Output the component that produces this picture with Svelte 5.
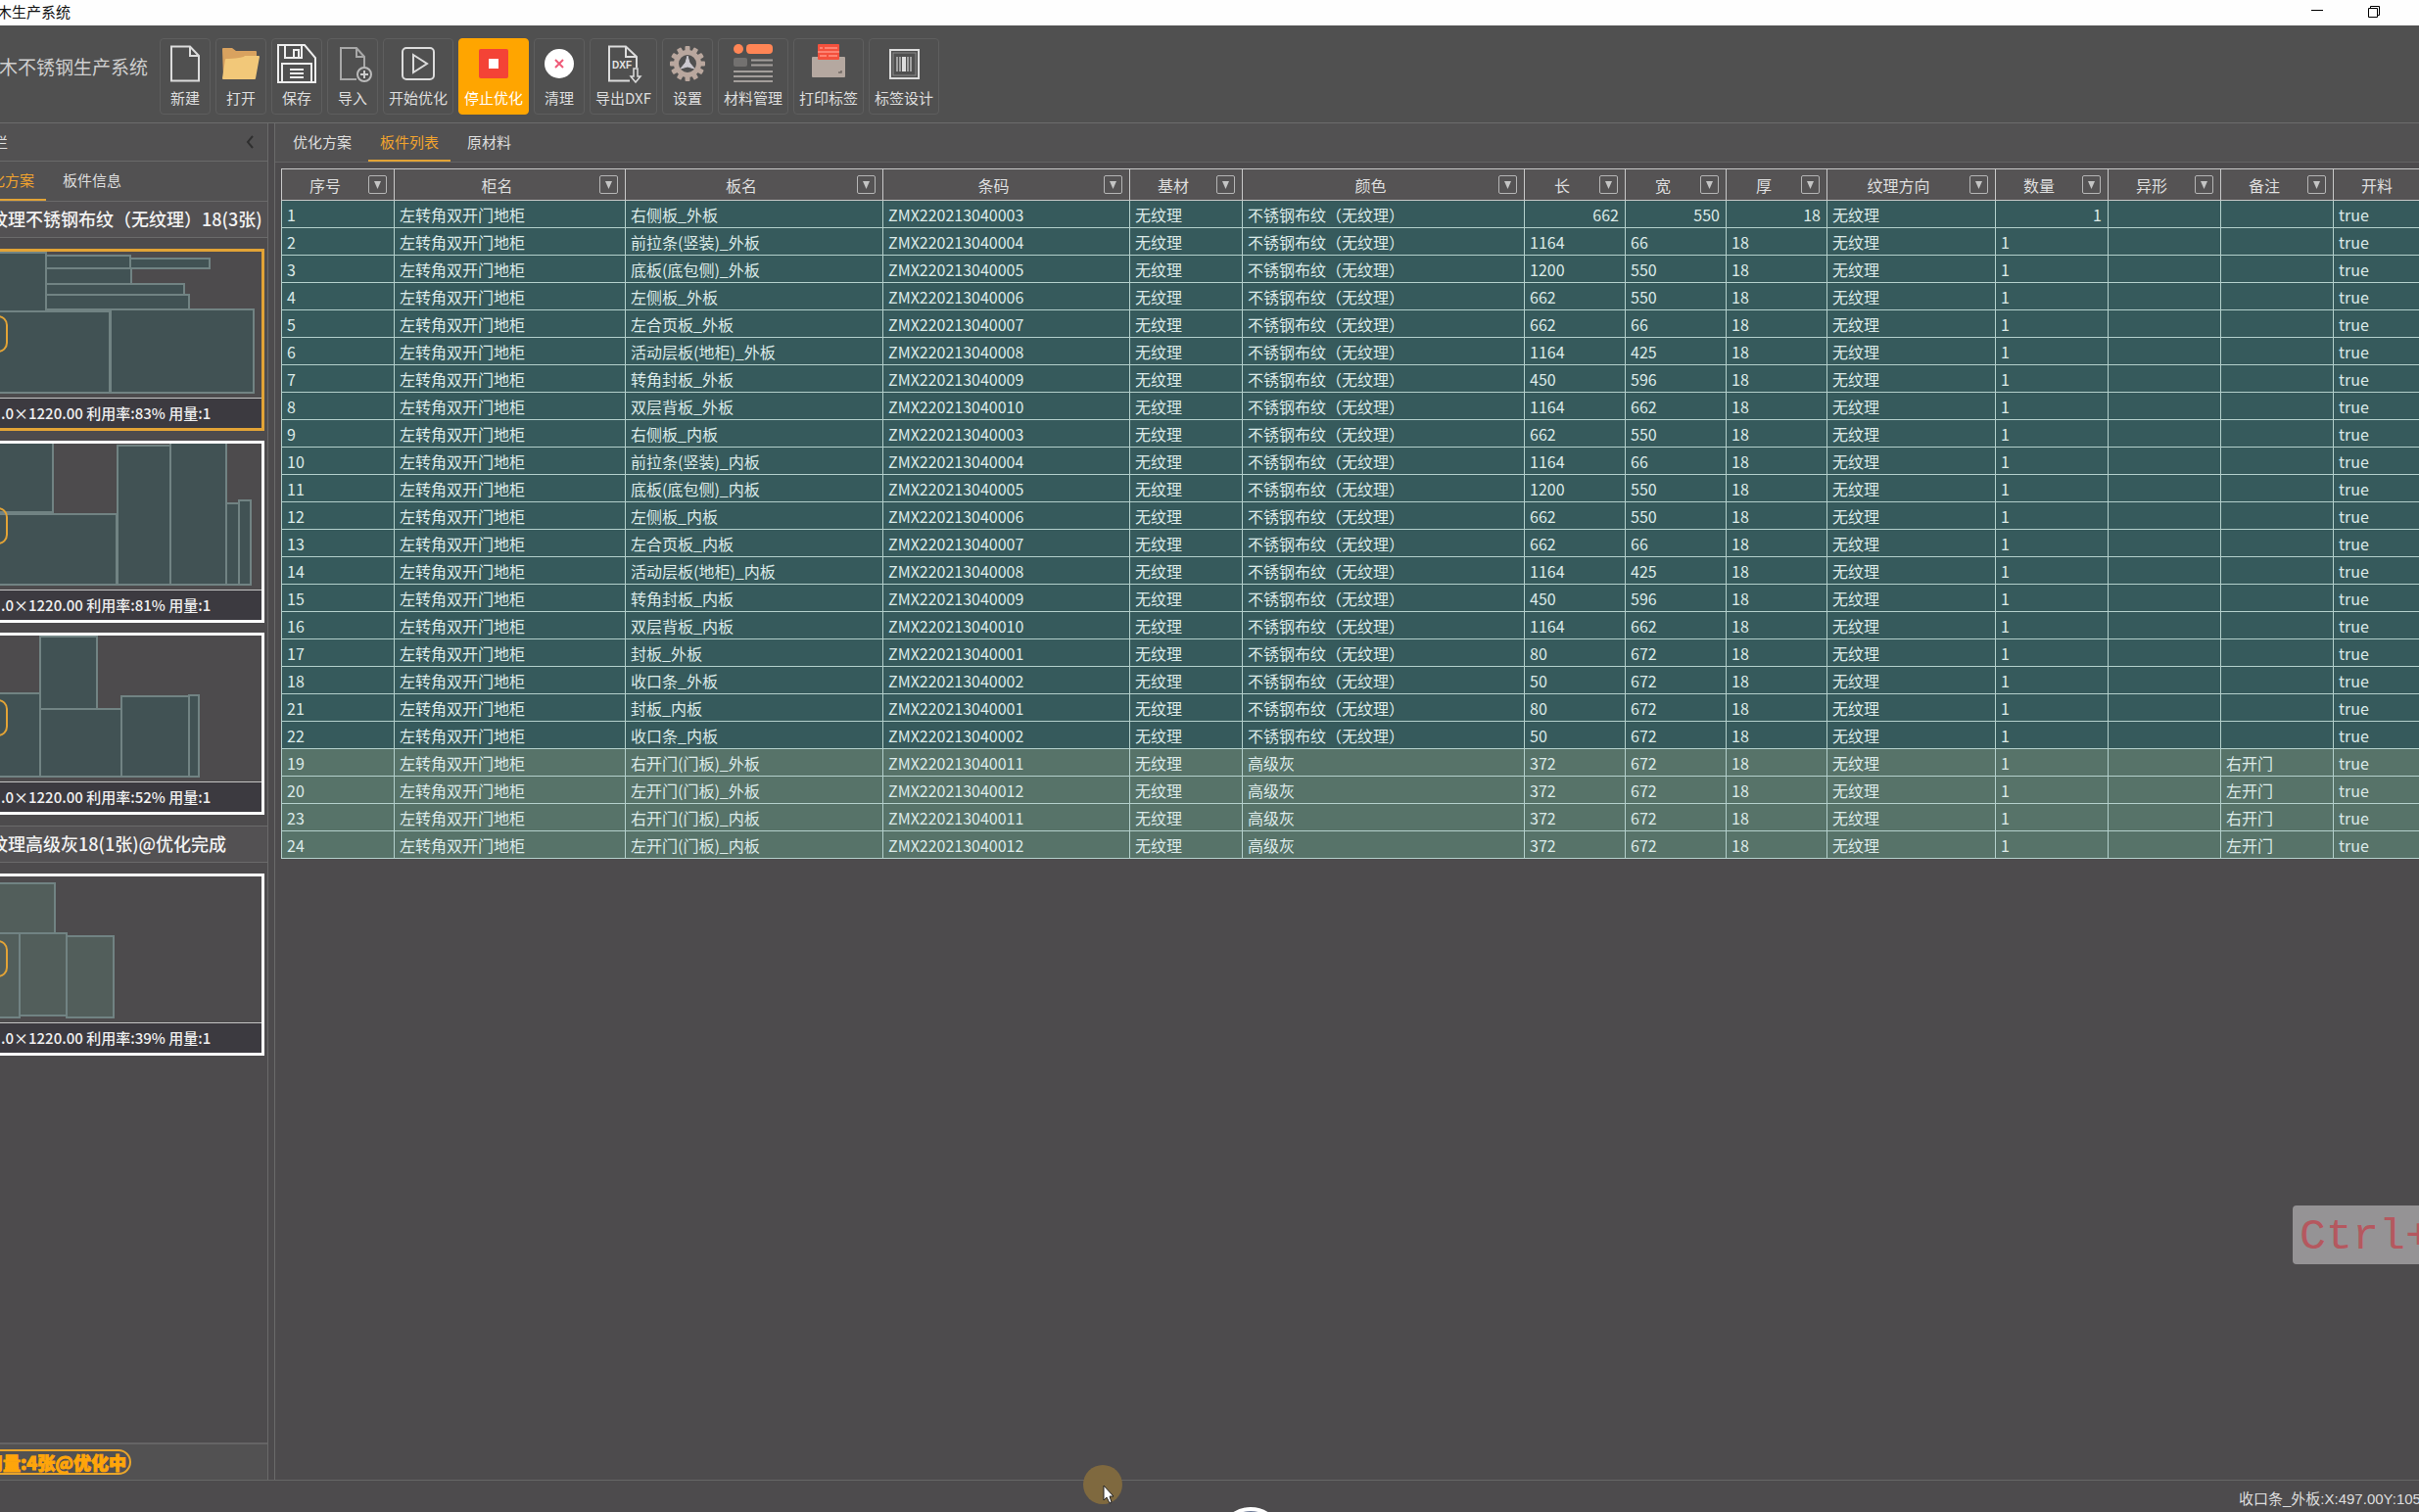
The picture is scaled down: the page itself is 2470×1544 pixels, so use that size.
<script lang="ts">
  type Sheet = { no: number; rate: number; grey?: boolean; parts: number[][] }

  const tools = [
    { id: 'new', label: '新建' },
    { id: 'open', label: '打开' },
    { id: 'save', label: '保存' },
    { id: 'import', label: '导入' },
    { id: 'start', label: '开始优化' },
    { id: 'stop', label: '停止优化' },
    { id: 'clear', label: '清理' },
    { id: 'dxf', label: '导出DXF' },
    { id: 'settings', label: '设置' },
    { id: 'material', label: '材料管理' },
    { id: 'print', label: '打印标签' },
    { id: 'design', label: '标签设计' }
  ]

  // parts are [x, y, width, height] on the 288x149 preview
  const groups: { title: string; sheets: Sheet[] }[] = [
    {
      title: '纹理不锈钢布纹（无纹理）18(3张)',
      sheets: [
        { no: 1, rate: 83, parts: [[0, 1, 68, 60], [68, 4, 86, 13], [154, 7, 81, 10], [68, 17, 87, 16], [68, 33, 141, 11], [68, 44, 146, 15], [0, 61, 133, 83], [134, 59, 146, 85]] },
        { no: 2, rate: 81, parts: [[0, -1, 75, 71], [0, 72, 140, 72], [141, 2, 54, 142], [195, -1, 57, 145], [252, 61, 13, 83], [265, 58, 12, 86]] },
        { no: 3, rate: 52, parts: [[0, 59, 62, 85], [62, 1, 58, 74], [62, 75, 83, 69], [145, 62, 69, 82], [214, 61, 10, 83]] }
      ]
    },
    {
      title: '纹理高级灰18(1张)@优化完成',
      sheets: [
        { no: 4, rate: 39, grey: true, parts: [[0, 7, 77, 51], [0, 58, 41, 86], [41, 58, 48, 84], [89, 61, 48, 83]] }
      ]
    }
  ]

  const columns = [
    { name: '序号', width: 115 },
    { name: '柜名', width: 236 },
    { name: '板名', width: 263 },
    { name: '条码', width: 252 },
    { name: '基材', width: 115 },
    { name: '颜色', width: 288 },
    { name: '长', width: 103 },
    { name: '宽', width: 103 },
    { name: '厚', width: 103 },
    { name: '纹理方向', width: 172 },
    { name: '数量', width: 115 },
    { name: '异形', width: 115 },
    { name: '备注', width: 115 },
    { name: '开料', width: 115 }
  ]
  const tableWidth = columns.reduce((sum, c) => sum + c.width, 0)
  const numeric = [6, 7, 8, 10]

  const steel = '不锈钢布纹（无纹理）'
  const grey = '高级灰'

  const panels: [number, string, string, number, number, string?][] = [
    [1, '右侧板_外板', '03', 662, 550],
    [2, '前拉条(竖装)_外板', '04', 1164, 66],
    [3, '底板(底包侧)_外板', '05', 1200, 550],
    [4, '左侧板_外板', '06', 662, 550],
    [5, '左合页板_外板', '07', 662, 66],
    [6, '活动层板(地柜)_外板', '08', 1164, 425],
    [7, '转角封板_外板', '09', 450, 596],
    [8, '双层背板_外板', '10', 1164, 662],
    [9, '右侧板_内板', '03', 662, 550],
    [10, '前拉条(竖装)_内板', '04', 1164, 66],
    [11, '底板(底包侧)_内板', '05', 1200, 550],
    [12, '左侧板_内板', '06', 662, 550],
    [13, '左合页板_内板', '07', 662, 66],
    [14, '活动层板(地柜)_内板', '08', 1164, 425],
    [15, '转角封板_内板', '09', 450, 596],
    [16, '双层背板_内板', '10', 1164, 662],
    [17, '封板_外板', '01', 80, 672],
    [18, '收口条_外板', '02', 50, 672],
    [21, '封板_内板', '01', 80, 672],
    [22, '收口条_内板', '02', 50, 672],
    [19, '右开门(门板)_外板', '11', 372, 672, '右开门'],
    [20, '左开门(门板)_外板', '12', 372, 672, '左开门'],
    [23, '右开门(门板)_内板', '11', 372, 672, '右开门'],
    [24, '左开门(门板)_内板', '12', 372, 672, '左开门']
  ]

  const rows = panels.map(([no, name, code, len, wid, note]) => ({
    door: !!note,
    cells: [no, '左转角双开门地柜', name, `ZMX2202130400${code}`, '无纹理', note ? grey : steel, len, wid, 18, '无纹理', 1, '', note ?? '', 'true']
  }))

  const mainTabs = ['优化方案', '板件列表', '原材料']
  const sideTabs = ['化方案', '板件信息']

  let mainTab = $state(1)
  let sideTab = $state(0)
  let selected = $state(1)
  const teeth = Array.from({ length: 12 }, (_, i) => i * 30)
</script>

{#snippet icon(id: string)}
  <svg class="icon" viewBox="0 0 40 40" fill="none" stroke="#dcdcdc" stroke-width="2" aria-hidden="true">
    {#if id === 'new'}
      <path d="M6 2.500H25L34 12V37.500H6Z" />
      <path d="M25 2.500V12H34" />
    {:else if id === 'open'}
      <path d="M1 5Q1 4 2 4H11L15 7H35Q36 7 36 8V14L8 17L2 34Z" fill="#d9a25f" stroke="none" />
      <path d="M8 15Q23 14 24 12H38Q39 12 39 13L35 35Q35 36 34 36H2Q1 36 1 35L4 16Q4 15 5 15Z" fill="#f2c879" stroke="none" />
    {:else if id === 'save'}
      <path d="M1 1H28L39 14V39H1Z M8 1V14H25V1 M17 14V6H22V14 M5 39V20H35V39 M13 26H27M13 30H27M13 34H27" stroke="#eee" />
    {:else if id === 'import'}
      <path d="M24 36H8V4H24L32 13V23M24 4V13H32" stroke="#a8a8a8" />
      <circle cx="32" cy="31" r="7" stroke="#bbb" />
      <path d="M32 27V35M28 31H36" stroke="#ccc" />
    {:else if id === 'start'}
      <rect x="4" y="4" width="32" height="32" rx="4" />
      <path d="M15 11L29 20L15 29Z" />
    {:else if id === 'stop'}
      <rect x="5" y="5" width="30" height="30" rx="2" fill="#f44336" stroke="none" />
      <rect x="15" y="15" width="10" height="10" fill="#fff" stroke="none" />
    {:else if id === 'clear'}
      <circle cx="20" cy="20" r="15" fill="#fff" stroke="none" />
      <path d="M16 16L24 24M24 16L16 24" stroke="#ef5a78" />
    {:else if id === 'dxf'}
      <path d="M34 24V13L23 2.500H6V37.500H27M23 2.500V13H34" />
      <text x="9" y="25" font-size="10" font-weight="700" fill="#e4e4e4" stroke="none">DXF</text>
      <path d="M31 25H35V33H38L33 39L28 33H31Z" stroke-width="1.500" />
    {:else if id === 'settings'}
      <g fill="#b9a79e" stroke="none">
        {#each teeth as a}
          <rect x="17.500" y="2" width="5" height="6" rx="1" transform={`rotate(${a} 20 20)`} />
        {/each}
      </g>
      <circle cx="20" cy="20" r="11.500" stroke="#b9a79e" stroke-width="5" />
      <path d="M20 12L22 19L27 25L20 23L13 25L18 19Z" fill="#ccc9d0" stroke="#ccc9d0" stroke-width="1" />
    {:else if id === 'material'}
      <g fill="#ff8555" stroke="none">
        <circle cx="5" cy="5" r="5" />
        <rect x="13" width="27" height="10" rx="4" />
      </g>
      <rect y="14" width="14" height="9" rx="2" fill="#737170" stroke="none" />
      <path d="M18 16.500H40M18 21.500H40M0 28H40M0 33H40M0 38H40" stroke="#a39e9b" />
    {:else if id === 'print'}
      <rect x="3" y="13" width="34" height="21" rx="1" fill="#b5a8a0" stroke="none" />
      <rect x="9" y="0" width="22" height="16" rx="1" fill="#f4513d" stroke="none" />
      <path d="M11 4H14M16 4H29M9 8H31M11 12H18M20 12H29" stroke="#ff9484" stroke-width="1.500" />
      <path d="M30 29H33V27" stroke="#6f6762" stroke-width="1.500" />
    {:else if id === 'design'}
      <rect x="6" y="6" width="29" height="29" />
      <rect x="9" y="9" width="23" height="23" stroke="#8a8a8a" stroke-width="1" />
      <path d="M13 13V28M16 13V28M24 13V28M27 13V28" stroke="#bbb" stroke-width="1.500" />
      <path d="M20 13V28" stroke="#ddd" stroke-width="4" />
    {/if}
  </svg>
{/snippet}

<div class="window">
  <header class="titlebar">
    <span>木生产系统</span>
    <div class="winbtns">
      <button aria-label="最小化">
        <svg width="14" height="14" viewBox="0 0 14 14" stroke="#000"><path d="M1 5.500H13" /></svg>
      </button>
      <button aria-label="还原">
        <svg width="14" height="14" viewBox="0 0 14 14" fill="none" stroke="#000">
          <path d="M1.500 3.500H10.500V12.500H1.500ZM3.500 3.500V1.500H12.500V10.500H10.500" />
        </svg>
      </button>
    </div>
  </header>

  <nav class="toolbar">
    <h1>木不锈钢生产系统</h1>
    <div class="tools">
      {#each tools as t (t.id)}
        <button class="tool" class:stop={t.id === 'stop'}>
          {@render icon(t.id)}
          <span>{t.label}</span>
        </button>
      {/each}
    </div>
  </nav>

  <div class="body">
    <aside class="side">
      <div class="side-head">
        <span>栏</span>
        <button class="collapse" aria-label="折叠">
          <svg width="9" height="14" viewBox="0 0 9 14" fill="none" stroke="#2f2f2f" stroke-width="2"><path d="M7 1L2 7L7 13" /></svg>
        </button>
      </div>
      <div class="side-tabs" role="tablist">
        {#each sideTabs as name, i}
          <button class="tab" role="tab" aria-selected={sideTab === i} class:active={sideTab === i} onclick={() => (sideTab = i)}>{name}</button>
        {/each}
      </div>
      <div class="sheets">
        {#each groups as g}
          <h2>{g.title}</h2>
          <div class="cards">
            {#each g.sheets as s (s.no)}
              <button class="card" class:selected={selected === s.no} onclick={() => (selected = s.no)}>
                <svg class="preview" class:grey={s.grey} viewBox="0 0 288 149" aria-hidden="true">
                  {#each s.parts as [x, y, w, h]}
                    <rect {x} {y} width={w} height={h} />
                  {/each}
                </svg>
                <span class="badge">{s.no}</span>
                <span class="caption">.0×1220.00 利用率:{s.rate}% 用量:1</span>
              </button>
            {/each}
          </div>
        {/each}
      </div>
      <div class="side-foot"><span class="total">用量:4张@优化中</span></div>
    </aside>

    <main>
      <div class="main-tabs" role="tablist">
        {#each mainTabs as name, i}
          <button class="tab" role="tab" aria-selected={mainTab === i} class:active={mainTab === i} onclick={() => (mainTab = i)}>{name}</button>
        {/each}
      </div>
      <div class="grid">
        <table style:width={`${tableWidth}px`}>
          <colgroup>
            {#each columns as c}
              <col style:width={`${c.width}px`} />
            {/each}
          </colgroup>
          <thead>
            <tr>
              {#each columns as c}
                <th>
                  <div class="th">
                    <span>{c.name}</span>
                    <button class="filter" aria-label={`筛选${c.name}`}>
                      <svg width="7" height="8" viewBox="0 0 7 8" fill="#c4c4c4"><path d="M0 0H7L3.500 8Z" /></svg>
                    </button>
                  </div>
                </th>
              {/each}
            </tr>
          </thead>
          <tbody>
            {#each rows as r, i}
              <tr class:door={r.door}>
                {#each r.cells as cell, j}
                  <td class:num={i === 0 && numeric.includes(j)}>{cell}</td>
                {/each}
              </tr>
            {/each}
          </tbody>
        </table>
      </div>
    </main>
  </div>

  <footer class="status"><span>收口条_外板:X:497.00Y:105</span></footer>

  <div class="keys">Ctrl+</div>
  <div class="pointer">
    <svg width="13" height="20" viewBox="0 0 13 20" fill="#fff" stroke="#222"><path d="M1 1V16L4 13L7 19L9 18L7 12H11Z" /></svg>
  </div>
  <div class="orb"></div>
</div>

<style>
  :global(body) {
    overflow: hidden;
    background: #4d4b4d;
  }
  .window {
    position: relative;
    display: flex;
    flex-direction: column;
    height: 100vh;
    margin-left: -24px;
    overflow: hidden;
    box-sizing: border-box;
    background: #4d4b4d;
    color: #dedede;
    font-family: "Noto Sans CJK SC", "Open Sans", sans-serif;
    font-size: 15px;
    line-height: 20px;
  }
  button {
    margin: 0;
    padding: 0;
    border: 0;
    background: none;
    color: inherit;
    font: inherit;
    cursor: pointer;
  }
  svg { display: block; }

  .titlebar {
    display: flex;
    align-items: center;
    justify-content: space-between;
    flex: none;
    height: 26px;
    padding: 0 39px 3px 21px;
    box-sizing: border-box;
    background: #fefefe;
    color: #111;
  }
  .winbtns {
    display: flex;
    gap: 44px;
  }

  .toolbar {
    display: flex;
    flex: none;
    align-items: center;
    height: 100px;
    padding: 4px 0 0 23px;
    box-sizing: border-box;
    border-bottom: 1px solid #6c6c6c;
    background: #505050;
  }
  h1 {
    width: 164px;
    margin: 0;
    padding-bottom: 20px;
    box-sizing: border-box;
    font-size: 19px;
    font-weight: 400;
    line-height: 24px;
    color: #cfcfcf;
    white-space: nowrap;
  }
  .tools {
    display: flex;
    gap: 5px;
  }
  .tool {
    display: flex;
    flex-direction: column;
    align-items: center;
    gap: 5px;
    height: 78px;
    min-width: 51px;
    padding: 5px;
    box-sizing: border-box;
    border: 1px solid #5e5e5e;
    border-radius: 4px;
    white-space: nowrap;
  }
  .tool.stop {
    border-color: #ffa500;
    background: #ffa500;
    color: #fff;
  }
  .icon {
    width: 40px;
    height: 40px;
    font-family: "Liberation Sans", sans-serif;
  }

  .body {
    display: flex;
    flex: 1;
    min-height: 0;
  }
  .side {
    display: flex;
    flex-direction: column;
    flex: none;
    width: 298px;
    box-sizing: border-box;
    border-right: 1px solid #6a6a6a;
  }
  .side-head {
    display: flex;
    align-items: center;
    justify-content: space-between;
    height: 39px;
    padding: 0 13px 0 17px;
    box-sizing: border-box;
    border-bottom: 1px solid #6a6a6a;
    background: #525152;
  }
  .side-tabs,
  .main-tabs {
    display: flex;
    gap: 5px;
    height: 40px;
    box-sizing: border-box;
    background: #525152;
  }
  .side-tabs { padding-left: 2px; }
  .tab {
    padding: 0 12px;
    border-bottom: 2px solid transparent;
    white-space: nowrap;
  }
  .tab.active {
    border-bottom-color: #e2a336;
    color: #f0a32e;
  }
  .sheets {
    flex: 1;
    min-height: 0;
    overflow: hidden;
  }
  h2 {
    height: 38px;
    margin: 0;
    padding-left: 14px;
    box-sizing: border-box;
    border: solid #6a6a6a;
    border-width: 1px 0;
    overflow: hidden;
    background: #535153;
    color: #f2f2f2;
    font-size: 18px;
    font-weight: 500;
    line-height: 35px;
    white-space: nowrap;
  }
  .cards {
    display: flex;
    flex-direction: column;
    gap: 10px;
    margin: 11px 3px 11px 0;
  }
  .card {
    position: relative;
    display: block;
    width: 100%;
    height: 186px;
    box-sizing: border-box;
    border: 3px solid #fff;
    text-align: left;
  }
  .card.selected { border-color: #e2a336; }
  .preview {
    width: 100%;
    height: 149px;
    overflow: hidden;
    fill: #415254;
    stroke: #718383;
    stroke-width: 2;
  }
  .preview.grey { fill: #525e5b; }
  .caption {
    display: block;
    height: 31px;
    padding-left: 22px;
    box-sizing: border-box;
    border-top: 1px solid #c4c4c4;
    overflow: hidden;
    background: #3c3a40;
    color: #f0f0f0;
    font-size: 15px;
    font-weight: 500;
    line-height: 29px;
    white-space: nowrap;
  }
  .badge {
    position: absolute;
    top: 65px;
    left: 0;
    width: 29px;
    height: 38px;
    box-sizing: border-box;
    border: 2px solid #e2a336;
    border-radius: 10px;
    color: #b8b840;
    font-size: 24px;
    line-height: 34px;
    text-align: center;
  }
  .side-foot {
    display: flex;
    align-items: center;
    height: 38px;
    box-sizing: border-box;
    border-top: 2px solid #656465;
    background: #525152;
  }
  .total {
    padding: 0 3px 0 7px;
    border: 2px solid #e8a52c;
    border-radius: 13px;
    color: #ffa50a;
    font-size: 18px;
    font-weight: 900;
    line-height: 22px;
    white-space: nowrap;
    -webkit-text-stroke: 1px #ffa50a;
  }

  main {
    display: flex;
    flex-direction: column;
    flex: 1;
    min-width: 0;
    margin-left: 6px;
    border-left: 1px solid #6a6a6a;
  }
  .main-tabs {
    flex: none;
    padding-left: 6px;
    border-bottom: 1px solid #636363;
  }
  .grid {
    flex: 1;
    min-height: 0;
    padding: 6px 0 0 6px;
    overflow: hidden;
  }
  table {
    table-layout: fixed;
    border-collapse: collapse;
    font-size: 16px;
  }
  th,
  td {
    height: 28px;
    box-sizing: border-box;
    border: 1px solid #b4d0cc;
    font-weight: 400;
    white-space: nowrap;
  }
  td {
    padding: 0 6px 0 5px;
    background: #365a5c;
    color: #dceae8;
  }
  .door td { background: #577369; }
  td.num { text-align: right; }
  th {
    height: 32px;
    padding: 0;
    border-color: #c8c8c8;
    background: #555354;
  }
  .th {
    display: flex;
    align-items: center;
    padding-right: 7px;
  }
  .th span {
    flex: 1;
    text-align: center;
  }
  .filter {
    display: flex;
    align-items: center;
    justify-content: center;
    width: 19px;
    height: 19px;
    box-sizing: border-box;
    border: 1px solid #b5b5b5;
    border-radius: 2px;
  }

  .status {
    display: flex;
    justify-content: flex-end;
    flex: none;
    height: 33px;
    padding-top: 9px;
    box-sizing: border-box;
    border-top: 1px solid #666;
  }
  .status span {
    width: 184px;
    font-family: "Liberation Sans", "Noto Sans CJK SC", sans-serif;
    white-space: nowrap;
  }

  .keys {
    position: absolute;
    right: 0;
    bottom: 253px;
    width: 129px;
    height: 60px;
    padding-left: 7px;
    box-sizing: border-box;
    border-radius: 4px 0 0 4px;
    overflow: hidden;
    background: #959395;
    color: #b5585f;
    font-family: "Liberation Mono", monospace;
    font-size: 45px;
    line-height: 66px;
  }
  .pointer {
    position: absolute;
    left: 1130px;
    bottom: 8px;
    width: 40px;
    height: 40px;
    padding: 20px 0 0 20px;
    box-sizing: border-box;
    border-radius: 50%;
    background: #7f693f;
  }
  .orb {
    position: absolute;
    left: 1268px;
    bottom: -61px;
    width: 66px;
    height: 66px;
    box-sizing: border-box;
    border: 4px solid #fff;
    border-radius: 50%;
    background: #6b7896;
  }
</style>
